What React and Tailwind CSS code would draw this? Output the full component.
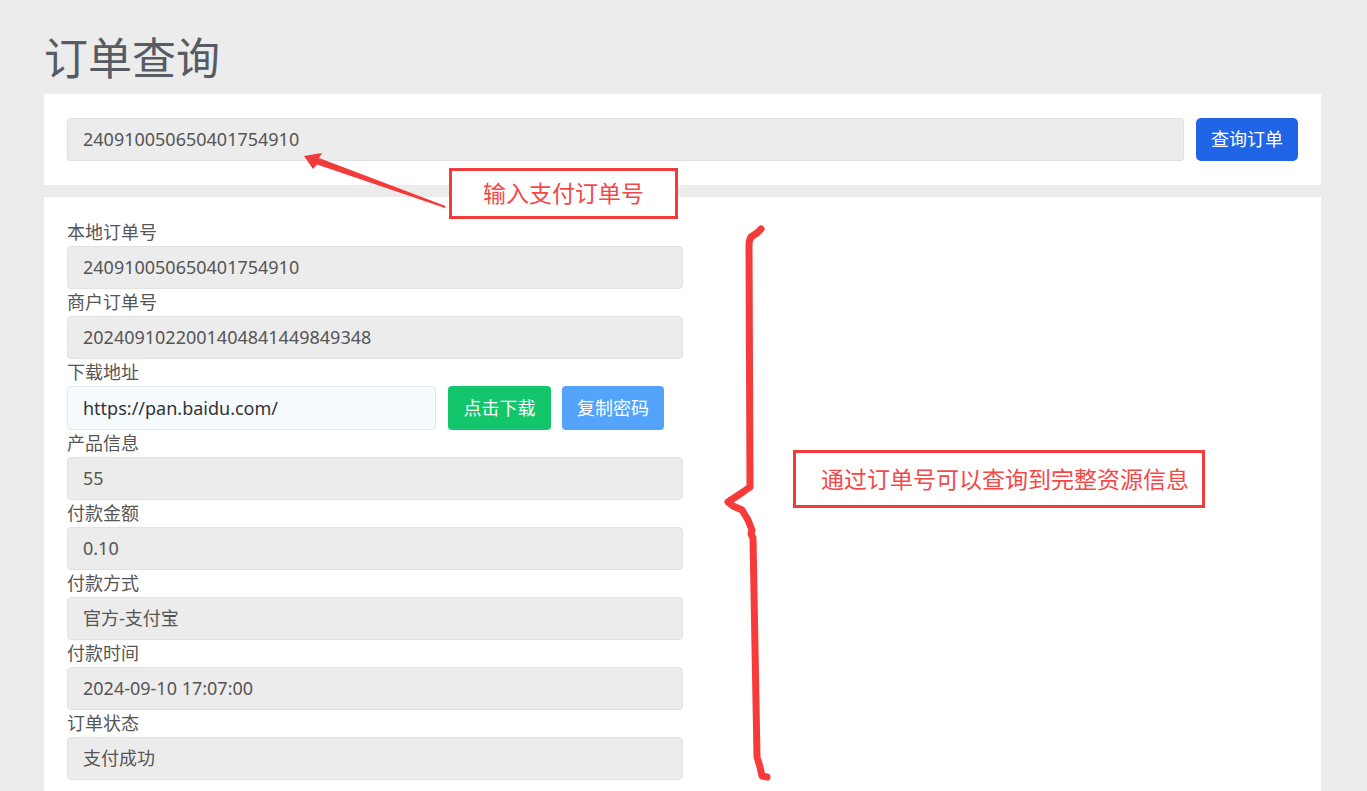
import React from 'react';

const fontStack = { fontFamily: '"Noto Sans", "Noto Sans CJK SC", sans-serif' };

const fields = [
  { label: '本地订单号', value: '240910050650401754910' },
  { label: '商户订单号', value: '2024091022001404841449849348' },
  { label: '下载地址', download: 'https://pan.baidu.com/' },
  { label: '产品信息', value: '55' },
  { label: '付款金额', value: '0.10' },
  { label: '付款方式', value: '官方-支付宝' },
  { label: '付款时间', value: '2024-09-10 17:07:00' },
  { label: '订单状态', value: '支付成功' },
];

const Field = ({ item }) => (
  <div>
    <p className="text-[18px] leading-[27px] text-[#555]">{item.label}</p>
    {item.download ? (
      <div className="flex h-[44px] items-stretch">
        <div className="flex w-[369px] items-center rounded-[4px] border border-[#e3e8ee] bg-[#f5fbff] px-[15px] text-[18px] text-[#333]">
          {item.download}
        </div>
        <button className="ml-[12px] w-[103px] rounded-[4px] bg-[#13c66b] text-[18px] text-white">点击下载</button>
        <button className="ml-[11px] w-[102px] rounded-[4px] bg-[#55a4fb] text-[18px] text-white">复制密码</button>
      </div>
    ) : (
      <div className="flex h-[43px] items-center rounded-[4px] border border-[#e2e2e2] bg-[#ececec] px-[15px] text-[18px] text-[#555]">
        {item.value}
      </div>
    )}
  </div>
);

export default function App() {
  return (
    <div className="relative min-h-screen overflow-hidden bg-[#ececec] pl-[44px] pr-[46px] pt-[26px]" style={fontStack}>
      <h1 className="mb-[4px] text-[44px] leading-[64px] text-[#575b63]">订单查询</h1>

      <div className="flex gap-[12px] bg-white px-[23px] py-[24px]">
        <div className="flex h-[43px] flex-1 items-center rounded-[3px] border border-[#e0e0e0] bg-[#ececec] px-[15px] text-[18px] text-[#555]">
          240910050650401754910
        </div>
        <button className="h-[43px] w-[102px] rounded-[5px] bg-[#1f65e6] text-[18px] text-white">查询订单</button>
      </div>

      <div className="mt-[12px] bg-white px-[23px] pb-[20px] pt-[22px]">
        <div className="flex w-[616px] flex-col">
          {fields.map((item) => (
            <Field key={item.label} item={item} />
          ))}
        </div>
      </div>

      {/* annotations drawn over the page */}
      <svg className="pointer-events-none absolute left-0 top-0" width="1367" height="791" viewBox="0 0 1367 791">
        <polygon points="304,156 322,153 319,158 445.5,206 445,208 317,164.5 313,169" fill="#f23b3b" />
        <path
          d="M761,229 L757,233 L751,237 Q749,240 749,246 L750,487 L743,492 L728,502 L733,506 L742,510 L748,520 L752,530 L751,534 L753,538 L757,757 L760,767 L762,776 L767,777"
          fill="none"
          stroke="#f73b3b"
          strokeWidth="7"
          strokeLinecap="round"
          strokeLinejoin="round"
        />
      </svg>

      <div className="absolute left-[449px] top-[168px] flex h-[51px] w-[229px] items-center justify-center border-[3px] border-[#f43b3b] bg-white text-[23px] text-[#f44848]">
        输入支付订单号
      </div>
      <div className="absolute left-[793px] top-[450px] flex h-[58px] w-[412px] items-center border-[3px] border-[#f43b3b] bg-white pl-[25px] text-[23px] text-[#f44848]">
        通过订单号可以查询到完整资源信息
      </div>
    </div>
  );
}
